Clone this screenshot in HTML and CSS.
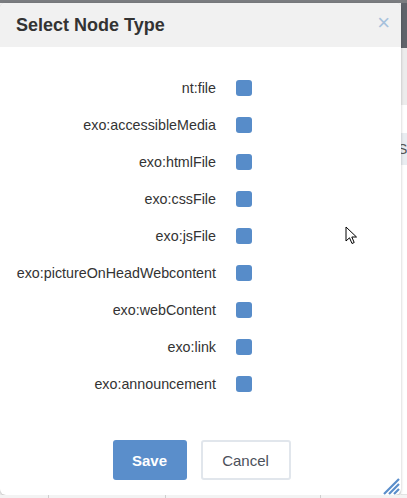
FILE: index.html
```
<!DOCTYPE html>
<html>
<head>
<meta charset="utf-8">
<link rel="stylesheet" href="styles.css">
</head>
<body>
<div class="page">
  <div class="topbar"></div>
  <div class="main">
    <div class="dialog">
      <div class="header">
        <h1 class="title">Select Node Type</h1>
        <span class="close">&times;</span>
      </div>
      <div class="body">
        <div class="row"><span class="label">nt:file</span><span class="check"></span></div>
        <div class="row"><span class="label">exo:accessibleMedia</span><span class="check"></span></div>
        <div class="row"><span class="label">exo:htmlFile</span><span class="check"></span></div>
        <div class="row"><span class="label">exo:cssFile</span><span class="check"></span></div>
        <div class="row"><span class="label">exo:jsFile</span><span class="check"></span></div>
        <div class="row"><span class="label">exo:pictureOnHeadWebcontent</span><span class="check"></span></div>
        <div class="row"><span class="label">exo:webContent</span><span class="check"></span></div>
        <div class="row"><span class="label">exo:link</span><span class="check"></span></div>
        <div class="row"><span class="label">exo:announcement</span><span class="check"></span></div>
      </div>
      <div class="footer">
        <button class="btn btn-primary">Save</button>
        <button class="btn btn-default">Cancel</button>
      </div>
      <svg class="resize" width="18" height="18" viewBox="0 0 18 18">
        <path d="M17 2 L2 17 M17 7 L7 17 M17 12 L12 17" stroke="#5a8ecb" stroke-width="2.2"/>
      </svg>
      <svg class="cursor" width="14" height="20" viewBox="0 0 14 20">
        <path d="M1 1 L1 15 L4.5 11.8 L7 17.5 L9.2 16.5 L6.8 11 L11.5 11 Z" fill="#fff" stroke="#000" stroke-width="1" stroke-linejoin="round"/>
      </svg>
    </div>
    <div class="strip">
      <div class="s1"></div>
      <div class="s2"></div>
      <div class="s3"></div>
      <div class="s4"><span class="glyph">S</span></div>
      <div class="s5"></div>
    </div>
  </div>
  <div class="bottombar">
    <span class="tick t1"></span>
    <span class="tick t2"></span>
    <span class="tick t3"></span>
  </div>
</div>
</body>
</html>
```
FILE: styles.css
```
* { box-sizing: border-box; }
html, body { margin: 0; padding: 0; }
body {
  width: 407px;
  height: 498px;
  overflow: hidden;
  font-family: "Liberation Sans", Arial, sans-serif;
  background: #f3f3f3;
}
.page { display: flex; flex-direction: column; height: 498px; }
.topbar { height: 3px; background: #7b7d80; flex: none; }
.main { display: flex; height: 492px; flex: none; }
.dialog {
  position: relative;
  width: 401px;
  height: 492px;
  background: #fff;
  border-radius: 6px;
  box-shadow: 0 1px 3px rgba(0,0,0,0.25);
  display: flex;
  flex-direction: column;
  overflow: hidden;
}
.header {
  height: 44px;
  background: #f1f1f1;
  display: flex;
  align-items: center;
  justify-content: space-between;
  padding: 0 11px 0 16px;
  flex: none;
}
.title {
  margin: 0;
  font-size: 18px;
  font-weight: bold;
  color: #333;
  line-height: 20px;
}
.close {
  color: #a7c1dc;
  font-size: 22px;
  line-height: 20px;
  margin-top: -4px;
}
.body {
  padding-top: 22px;
  display: flex;
  flex-direction: column;
}
.row {
  height: 37px;
  display: flex;
  align-items: center;
}
.label {
  width: 216px;
  text-align: right;
  font-size: 14.3px;
  color: #333;
}
.check {
  width: 16px;
  height: 16px;
  margin-left: 20px;
  background: #578cc9;
  border-radius: 3px;
}
.footer {
  margin-top: 38px;
  display: flex;
  justify-content: center;
  gap: 14px;
  padding-left: 2px;
}
.btn {
  height: 40px;
  font-family: "Liberation Sans", Arial, sans-serif;
  font-size: 15px;
  border-radius: 3px;
  padding: 0;
}
.btn-primary {
  width: 74px;
  background: #5a8ecb;
  color: #fff;
  font-weight: bold;
  border: none;
}
.btn-default {
  width: 90px;
  background: #fff;
  color: #4b505a;
  border: 2px solid #e1e6ec;
}
.resize { position: absolute; right: 1px; bottom: 0; }
.cursor { position: absolute; left: 345px; top: 223px; }
.strip { flex: 1; display: flex; flex-direction: column; overflow: hidden; }
.s1 { height: 45px; background: #5f636a; }
.s2 { height: 57px; background: #ececec; }
.s3 { height: 28px; background: #fff; }
.s4 {
  height: 32px;
  background: #e9edf1;
  color: #555;
  font-size: 14px;
  line-height: 32px;
  overflow: hidden;
  white-space: nowrap;
}
.glyph { display: inline-block; margin-left: -3px; }
.s5 { flex: 1; background: #fff; border-bottom: 1px solid #e3e3e3; }
.bottombar { flex: 1; background: #f3f3f3; position: relative; }
.tick { position: absolute; top: 0; bottom: 0; width: 1px; background: #cfcfcf; }
.t1 { left: 48px; }
.t2 { left: 165px; }
.t3 { left: 320px; }
```
